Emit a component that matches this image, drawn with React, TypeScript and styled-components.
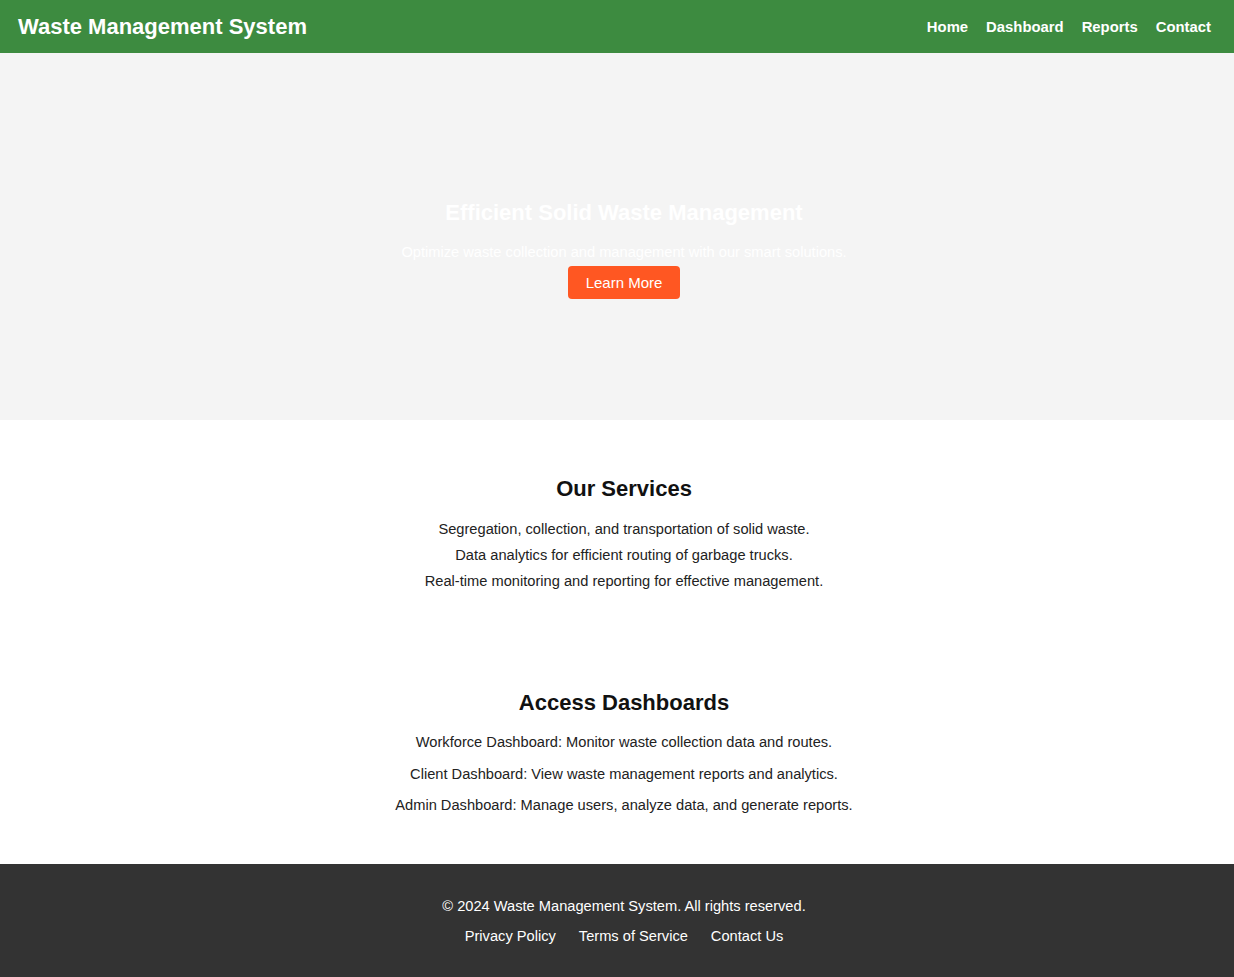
import React from "react";
import styled, { createGlobalStyle } from "styled-components";

const Global = createGlobalStyle`
  html, body { margin: 0; padding: 0; }
  body { font-family: "Liberation Sans", Arial, sans-serif; background: #fff; color: #222; }
  * { box-sizing: border-box; }
`;

const Header = styled.header`
  height: 53px;
  background: #3d8b40;
  display: flex;
  align-items: center;
  justify-content: space-between;
  padding: 0 22px 0 18px;
`;

const Brand = styled.h1`
  margin: 0;
  color: #fff;
  font-size: 22px;
  font-weight: 700;
`;

const Nav = styled.nav`
  display: flex;
  gap: 18px;
  margin-right: 1px;
`;

const NavLink = styled.a`
  color: #fff;
  font-weight: 700;
  font-size: 14.85px;
  text-decoration: none;
`;

const Hero = styled.section`
  height: 367px;
  background: #f4f4f4;
  display: flex;
  flex-direction: column;
  align-items: center;
  padding: 147px 0 0 14px;
  text-align: center;
`;

const HeroTitle = styled.h2`
  margin: 0;
  color: #fff;
  font-size: 22px;
  font-weight: 700;
`;

const HeroText = styled.p`
  margin: 18px 0 0;
  color: #fff;
  font-size: 14.65px;
`;

const Button = styled.button`
  margin-top: 6px;
  background: #ff5722;
  color: #fff;
  border: none;
  border-radius: 4px;
  font-family: inherit;
  font-size: 15px;
  width: 112px;
  height: 33px;
`;

const Section = styled.section<{ $top: number }>`
  padding: ${(p) => p.$top}px 0 0 14px;
  text-align: center;
`;

const SectionTitle = styled.h3<{ $gap: number }>`
  margin: 0 0 ${(p) => p.$gap}px;
  font-size: 22px;
  font-weight: 700;
  color: #111;
`;

const Line = styled.p<{ $gap: number }>`
  margin: 0;
  font-size: 14.65px;
  line-height: ${(p) => p.$gap}px;
  color: #222;
`;

const Footer = styled.footer`
  margin-top: 42px;
  background: #333;
  height: 113px;
  display: flex;
  flex-direction: column;
  align-items: center;
  padding: 34px 0 0 14px;
  color: #fff;
`;

const Copy = styled.p`
  margin: 0;
  font-size: 14.65px;
`;

const FooterLinks = styled.div`
  display: flex;
  gap: 23px;
  margin-top: 14px;
`;

const FooterLink = styled.a`
  color: #fff;
  font-size: 14.65px;
  text-decoration: none;
`;

export default function App() {
  return (
    <>
      <Global />
      <Header>
        <Brand>Waste Management System</Brand>
        <Nav>
          <NavLink href="#">Home</NavLink>
          <NavLink href="#">Dashboard</NavLink>
          <NavLink href="#">Reports</NavLink>
          <NavLink href="#">Contact</NavLink>
        </Nav>
      </Header>
      <Hero>
        <HeroTitle>Efficient Solid Waste Management</HeroTitle>
        <HeroText>Optimize waste collection and management with our smart solutions.</HeroText>
        <Button>Learn More</Button>
      </Hero>
      <Section $top={56}>
        <SectionTitle $gap={14}>Our Services</SectionTitle>
        <Line $gap={26}>Segregation, collection, and transportation of solid waste.</Line>
        <Line $gap={26}>Data analytics for efficient routing of garbage trucks.</Line>
        <Line $gap={26}>Real-time monitoring and reporting for effective management.</Line>
      </Section>
      <Section $top={96}>
        <SectionTitle $gap={11}>Access Dashboards</SectionTitle>
        <Line $gap={31.5}>Workforce Dashboard: Monitor waste collection data and routes.</Line>
        <Line $gap={31.5}>Client Dashboard: View waste management reports and analytics.</Line>
        <Line $gap={31.5}>Admin Dashboard: Manage users, analyze data, and generate reports.</Line>
      </Section>
      <Footer>
        <Copy>© 2024 Waste Management System. All rights reserved.</Copy>
        <FooterLinks>
          <FooterLink href="#">Privacy Policy</FooterLink>
          <FooterLink href="#">Terms of Service</FooterLink>
          <FooterLink href="#">Contact Us</FooterLink>
        </FooterLinks>
      </Footer>
    </>
  );
}
